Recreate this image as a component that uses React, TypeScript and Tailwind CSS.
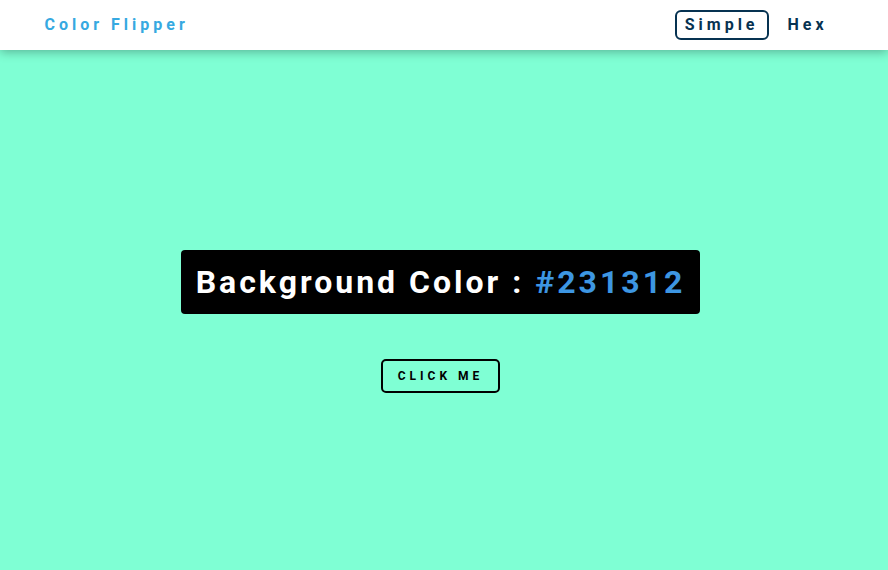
export default function App() {
  return (
    <div className="min-h-screen bg-[#7fffd4] font-['Roboto',sans-serif]">
      <nav className="h-[50px] bg-white shadow-[0_2px_10px_rgba(0,0,0,0.3)] relative z-10">
        <div className="w-[90vw] h-full mx-auto flex items-center justify-between">
          <h4 className="text-[16px] font-bold tracking-[4px] text-[#36a9e1]">Color Flipper</h4>
          <ul className="flex items-center gap-[9px] mr-[6px]">
            <li>
              <a className="block border-2 border-[#063251] rounded-[6px] px-[8px] py-[1px] text-[16px] leading-[24px] font-bold tracking-[4px] text-[#063251]">
                Simple
              </a>
            </li>
            <li>
              <a className="block border-2 border-transparent rounded-[6px] px-[8px] py-[1px] text-[16px] leading-[24px] font-bold tracking-[4px] text-[#063251]">
                Hex
              </a>
            </li>
          </ul>
        </div>
      </nav>
      <main className="flex flex-col items-center pt-[200px] pr-[7px]">
        <h2 className="bg-black text-white rounded-[4px] px-[15px] py-[16px] text-[32px] leading-[32px] font-bold tracking-[3px]">
          Background Color : <span className="text-[#3d96e2]">#231312</span>
        </h2>
        <button className="mt-[45px] border-2 border-black rounded-[5px] px-[15px] py-[8px] text-[12px] leading-[14px] font-bold tracking-[4px] uppercase text-black">
          click me
        </button>
      </main>
    </div>
  );
}
